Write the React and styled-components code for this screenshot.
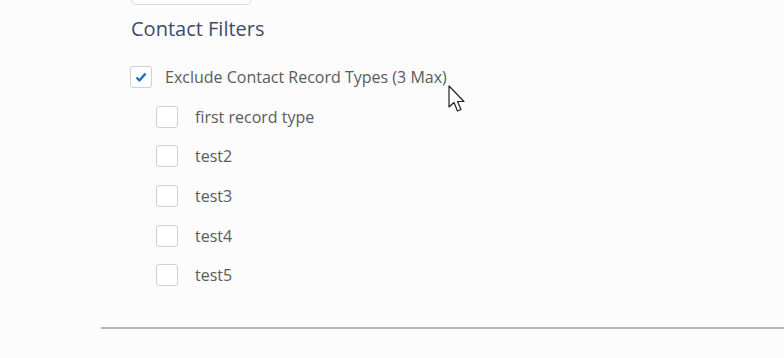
import React from 'react'
import styled, { createGlobalStyle } from 'styled-components'

const GlobalStyle = createGlobalStyle`
    html, body {
        margin: 0;
        padding: 0;
        background: #fcfcfc;
        font-family: "Open Sans", "Liberation Sans", sans-serif;
    }
`;

const Page = styled.div`
    position: relative;
    width: 784px;
    height: 358px;
    overflow: hidden;
`;

const Section = styled.div`
    padding-left: 131px;
`;

const TopBox = styled.div`
    width: 118px;
    height: 4px;
    border: 1px solid #d6d9de;
    border-top: none;
    border-radius: 0 0 5px 5px;
`;

const Heading = styled.h2`
    margin: 11px 0 0;
    font-size: 20px;
    font-weight: 400;
    line-height: 26px;
    color: #3b4d6b;
`;

const List = styled.div`
    display: flex;
    flex-direction: column;
    margin-top: 24px;
`;

const Row = styled.label`
    display: flex;
    align-items: center;
    height: ${p => (p.$child ? '39.6px' : '22px')};
    padding-left: ${p => (p.$child ? '26px' : '0')};
    margin-bottom: ${p => (p.$first ? '9px' : '0')};
    font-size: 16px;
    color: #5b5b5b;
`;

const Box = styled.span`
    box-sizing: border-box;
    width: 22px;
    height: 22px;
    margin-right: ${p => (p.$child ? '17px' : '13px')};
    margin-left: -1px;
    border: 1px solid #cfcfcf;
    border-radius: 3px;
    background: #fff;
    display: flex;
    align-items: center;
    justify-content: center;
`;

const Divider = styled.div`
    position: absolute;
    left: 101px;
    right: 0;
    top: 327px;
    height: 2px;
    background: #b4b4b4;
`;

const Cursor = styled.svg`
    position: absolute;
    left: 448px;
    top: 85px;
`;

function Check() {
    return (
        <svg width="12" height="10" viewBox="0 0 12 10">
            <path d="M1.5 5.5 L4.5 8.5 L10.5 1.5" fill="none" stroke="#1d6fc0" strokeWidth="2.4" strokeLinejoin="round" />
        </svg>
    )
}

const types = ['first record type', 'test2', 'test3', 'test4', 'test5'];

export default function App() {
    return (
        <Page>
            <GlobalStyle />
            <Section>
                <TopBox />
                <Heading>Contact Filters</Heading>
                <List>
                    <Row $first>
                        <Box><Check /></Box>
                        Exclude Contact Record Types (3 Max)
                    </Row>
                    {types.map(t => (
                        <Row $child key={t}>
                            <Box $child />
                            {t}
                        </Row>
                    ))}
                </List>
            </Section>
            <Divider />
            <Cursor width="20" height="30" viewBox="0 0 20 30">
                <path d="M1 1 L1 22 L6 17.5 L9.5 26 L13 24.5 L9.5 16.5 L16 16.5 Z" fill="#fff" stroke="#222" strokeWidth="1.2" strokeLinejoin="round" />
            </Cursor>
        </Page>
    )
}
